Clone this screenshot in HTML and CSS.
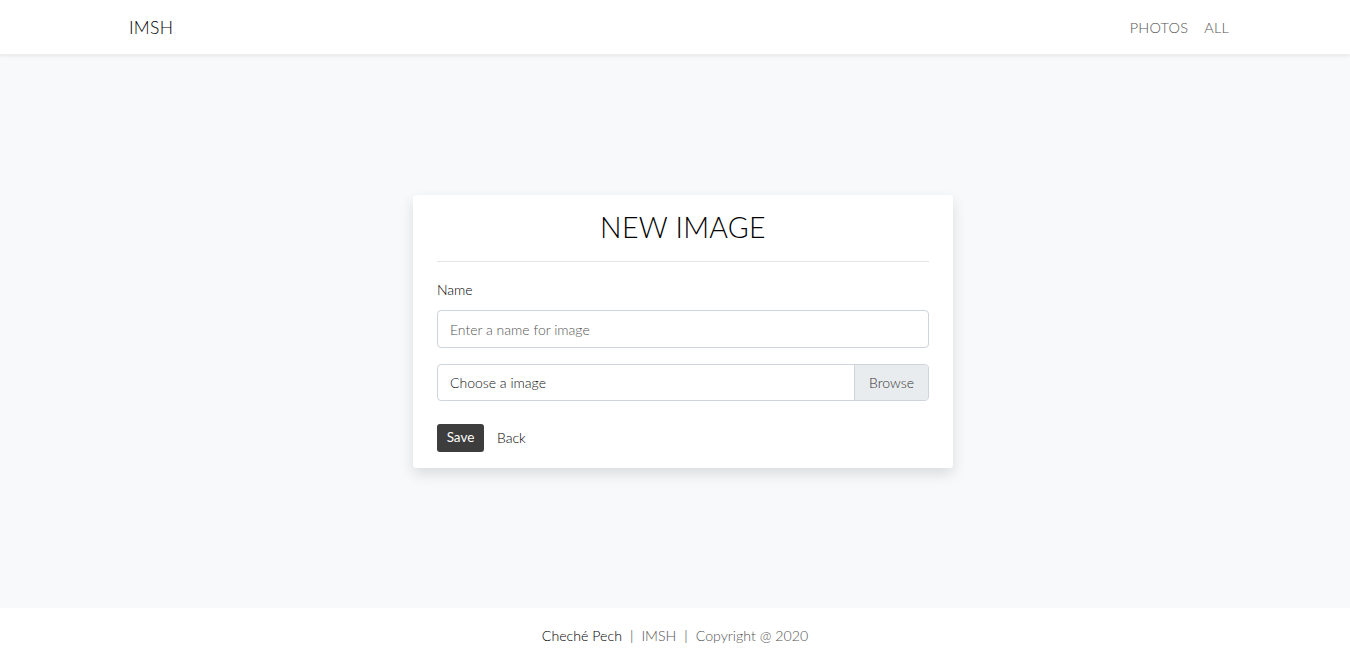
FILE: index.html
```html
<!DOCTYPE html>
<html lang="en">
<head>
<meta charset="utf-8">
<title>IMSH</title>
<link rel="stylesheet" href="styles.css">
</head>
<body>
<header class="navbar">
  <div class="nav-inner">
    <a class="brand" href="#">IMSH</a>
    <nav class="links">
      <a href="#">PHOTOS</a>
      <a href="#">ALL</a>
    </nav>
  </div>
</header>
<main class="main">
  <div class="card">
    <h1 class="title">NEW IMAGE</h1>
    <hr class="rule">
    <label class="label">Name</label>
    <div class="input">Enter a name for image</div>
    <div class="file">
      <span class="file-text">Choose a image</span>
      <span class="file-btn">Browse</span>
    </div>
    <div class="actions">
      <span class="btn-save">Save</span>
      <a class="back" href="#">Back</a>
    </div>
  </div>
</main>
<footer class="footer">
  <span class="author">Cheché Pech</span><span class="sep">|</span><span class="muted">IMSH</span><span class="sep">|</span><span class="muted">Copyright @ 2020</span>
</footer>
</body>
</html>
```
FILE: styles.css
```css
* { box-sizing: border-box; }
html, body { margin: 0; padding: 0; }
body {
  font-family: Lato, "Noto Sans", sans-serif;
  font-size: 14px;
  font-weight: 300;
  color: #000;
  height: 664px;
  display: flex;
  flex-direction: column;
  background: #fff;
}
a { text-decoration: none; color: inherit; }
.navbar {
  height: 55px;
  background: #fff;
  box-shadow: 0 1px 3px rgba(0,0,0,0.08);
  border-bottom: 1px solid #eceef0;
  position: relative;
  z-index: 1;
}
.nav-inner {
  width: 1140px;
  margin: 0 auto;
  height: 100%;
  display: flex;
  align-items: center;
  justify-content: space-between;
  padding: 0 16px 0 24px;
}
.brand { font-size: 17.5px; color: #000; letter-spacing: 0.3px; }
.links { display: flex; gap: 16px; }
.links a { font-size: 14.5px; color: #555; letter-spacing: 0.2px; }
.main {
  flex: 1;
  background: #f8f9fa;
  display: flex;
  align-items: center;
  justify-content: center;
  padding-left: 16px;
}
.card {
  width: 540px;
  background: #fff;
  border-radius: 3px;
  box-shadow: 0 6px 14px rgba(0,0,0,0.12);
  padding: 14px 24px 16px;
  display: flex;
  flex-direction: column;
}
.title {
  margin: 0;
  text-align: center;
  font-weight: 300;
  font-size: 28.5px;
  line-height: 36px;
  color: #000;
  letter-spacing: 0.3px;
}
.rule { border: 0; border-top: 1px solid #e5e5e5; margin: 16px 0 18px; width: 100%; }
.label { font-size: 14px; line-height: 20px; color: #000; margin-bottom: 10px; }
.input {
  height: 38px;
  border: 1px solid #ced4da;
  border-radius: 4px;
  padding: 0 12px;
  display: flex;
  align-items: center;
  color: #555;
  font-size: 14px;
  margin-bottom: 16px;
}
.file {
  height: 37px;
  border: 1px solid #ced4da;
  border-radius: 4px;
  display: flex;
  align-items: stretch;
  overflow: hidden;
  margin-bottom: 23px;
}
.file-text { flex: 1; display: flex; align-items: center; padding: 0 12px; color: #111; }
.file-btn {
  width: 74px;
  background: #e9ecef;
  border-left: 1px solid #ced4da;
  display: flex;
  align-items: center;
  justify-content: center;
  color: #333;
}
.actions { display: flex; align-items: center; gap: 13px; }
.btn-save {
  height: 28px;
  width: 47px;
  background: #3d3d3d;
  color: #fff;
  border-radius: 3px;
  display: flex;
  align-items: center;
  justify-content: center;
  font-size: 13.5px;
  font-weight: 400;
  padding-bottom: 2px;
}
.back { color: #000; font-size: 14px; padding-bottom: 2px; }
.footer {
  height: 56px;
  display: flex;
  align-items: center;
  justify-content: center;
  font-size: 14.2px;
  color: #555;
  padding-bottom: 2px;
}
.author { color: #000; }
.sep { margin: 0 8px; color: #333; }
```
